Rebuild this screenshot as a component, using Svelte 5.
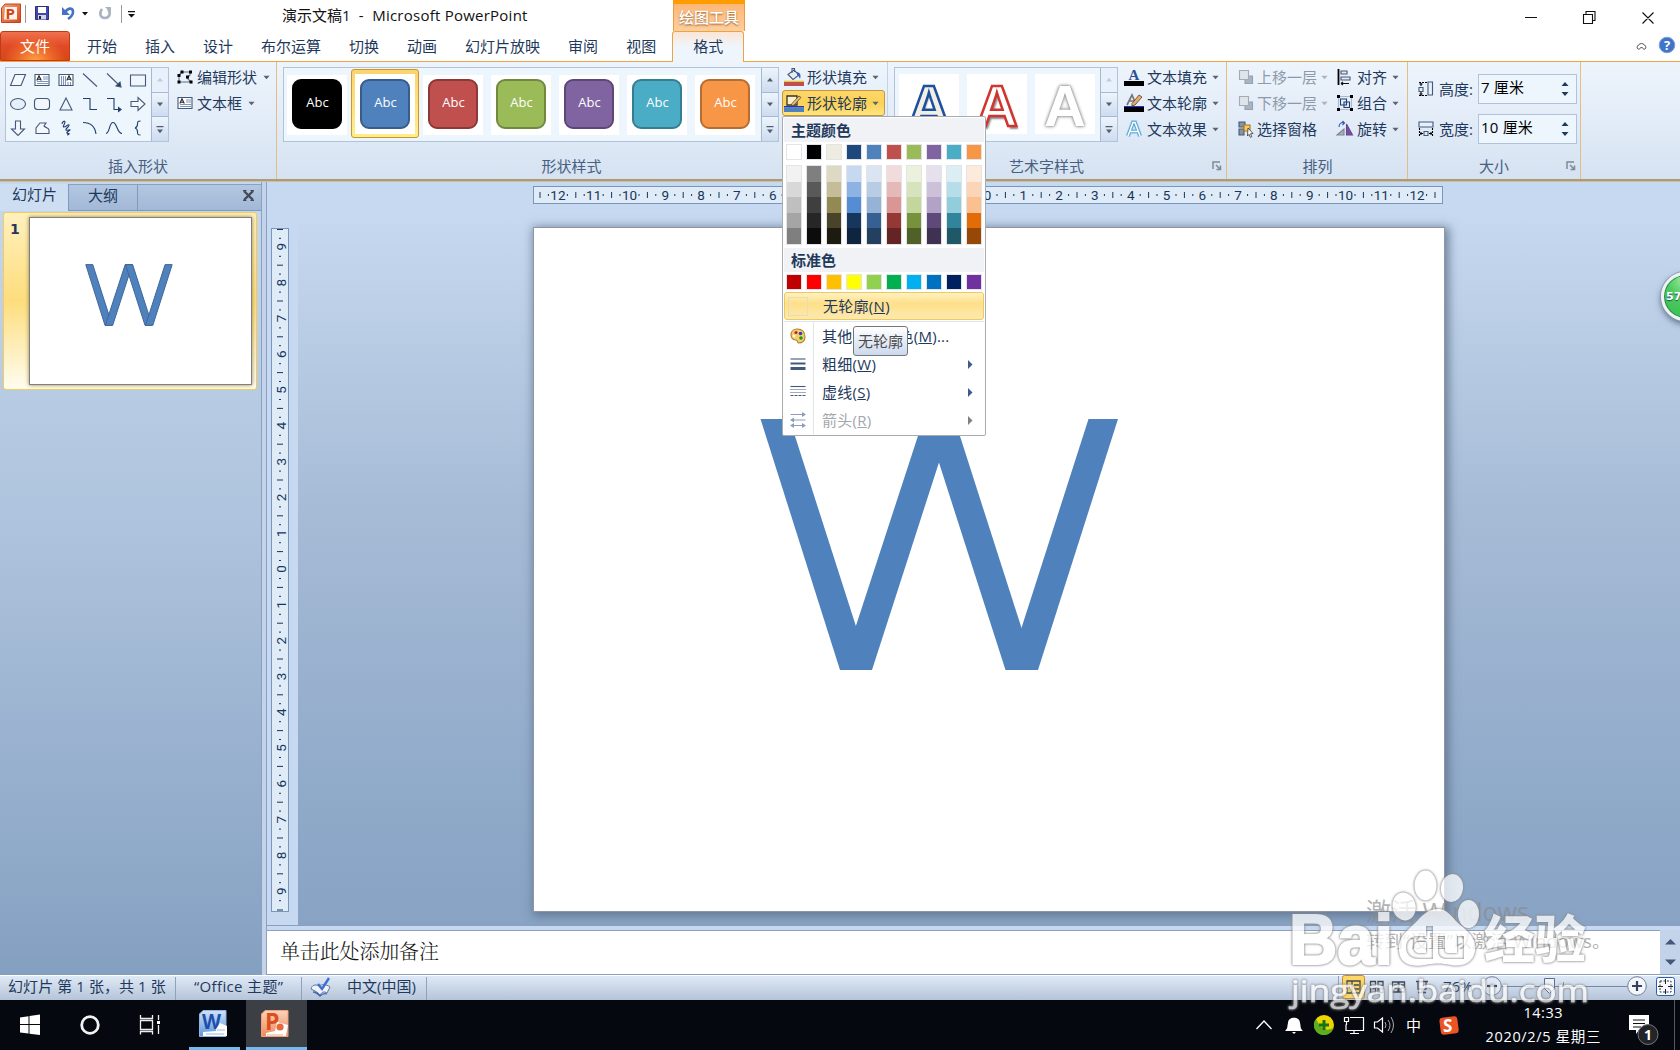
<script>
  const tabs = ['开始', '插入', '设计', '布尔运算', '切换', '动画', '幻灯片放映', '审阅', '视图'];
  const styles = [
    ['#000000', '#000000'],
    ['#4f81bd', '#385d8a'],
    ['#c0504d', '#8c3836'],
    ['#9bbb59', '#71893f'],
    ['#8064a2', '#5c4776'],
    ['#4bacc6', '#357d91'],
    ['#f79646', '#b66d31'],
  ];
  const shapes = ['para', 'tbox', 'vtbox', 'line', 'arrow', 'rect', 'oval', 'round', 'tri', 'elbow', 'elbowArrow', 'rightArrow', 'downArrow', 'free', 'scribble', 'arc', 'curve', 'brace'];
  const theme = ['#ffffff', '#000000', '#eeece1', '#1f497d', '#4f81bd', '#c0504d', '#9bbb59', '#8064a2', '#4bacc6', '#f79646'];
  const shades = [
    ['#f2f2f2', '#d8d8d8', '#bfbfbf', '#a5a5a5', '#7f7f7f'],
    ['#7f7f7f', '#595959', '#3f3f3f', '#262626', '#0c0c0c'],
    ['#ddd9c3', '#c4bd97', '#938953', '#494429', '#1d1b10'],
    ['#c6d9f0', '#8db3e2', '#548dd4', '#17365d', '#0f243e'],
    ['#dbe5f1', '#b8cce4', '#95b3d7', '#366092', '#244061'],
    ['#f2dcdb', '#e5b9b7', '#d99694', '#953734', '#632423'],
    ['#ebf1dd', '#d7e3bc', '#c3d69b', '#76923c', '#4f6128'],
    ['#e5e0ec', '#ccc1d9', '#b2a2c7', '#5f497a', '#3f3151'],
    ['#dbeef3', '#b7dde8', '#92cddc', '#31859b', '#205867'],
    ['#fdeada', '#fbd5b5', '#fac08f', '#e36c09', '#974806'],
  ];
  const standard = ['#c00000', '#ff0000', '#ffc000', '#ffff00', '#92d050', '#00b050', '#00b0f0', '#0070c0', '#002060', '#7030a0'];
  const hticks = Array.from({ length: 25 }, (_, i) => i - 12);
  const vticks = Array.from({ length: 19 }, (_, i) => i - 9);
  const step = 35.8;
</script>

{#snippet caret(cls)}
  <svg class="caret {cls}" viewBox="0 0 8 5" width="8" height="5"><path d="M0.5 0.5h7L4 4.5z" /></svg>
{/snippet}

{#snippet letters()}
  <svg class="fill" viewBox="0 0 910 683">
    <polygon points="226.5,191 255.5,191 336,442 306,442" />
    <polygon points="307.5,442 338,442 419,191 389.5,191" />
    <polygon points="391,191 420.5,191 501,442 471.5,442" />
    <polygon points="474,442 504,442 584,191 554.5,191" />
  </svg>
{/snippet}

{#snippet scroll(dis)}
  <div class="scroll">
    <span class="sb" class:dis><svg width="8" height="5" viewBox="0 0 8 5"><path d="M1 4.5h6L4 .8z" /></svg></span>
    <span class="sb"><svg width="8" height="5" viewBox="0 0 8 5"><path d="M1 .5h6L4 4.2z" /></svg></span>
    <span class="sb"><svg width="8" height="9" viewBox="0 0 8 9"><path d="M.5 1h7v1.2h-7zM1 4.5h6L4 8.2z" /></svg></span>
  </div>
{/snippet}

{#snippet icon(n)}
  <svg class="ic" width="20" height="20" viewBox="0 0 20 20" fill="none" stroke="#44597a" stroke-width="1.1">
    {#if n === 'para'}<path d="M7 4.500h10.500l-4.500 11h-10.500z" fill="#f4f8fd" />
    {:else if n === 'tbox' || n === 'textbox'}
      <path d="M3 4.500h14v11H3z" fill="#fff" /><path d="M11 7h5M11 9h5M5 11.500h11M5 13.500h11" stroke="#7d95bd" /><path d="M4.800 10.500 7 5.800l2.300 4.700M5.500 9.200h3" stroke="#222" />
    {:else if n === 'vtbox'}
      <path d="M3 4.500h14v11H3z" fill="#fff" /><path d="M5.500 6v9M7.500 6v9M9.500 6v9M12 12v3M14.500 12v3" stroke="#7d95bd" /><path d="M10.800 10.500 13 5.800l2.300 4.700M11.500 9.200h3" stroke="#222" />
    {:else if n === 'line'}<path d="M3 3.500l14 13" />
    {:else if n === 'arrow'}<path d="M3 3.500l12 11.500" /><path d="M17 17l-1-5-4 4z" fill="#1f3d6b" />
    {:else if n === 'rect'}<path d="M2.500 5h15v11h-15z" fill="#f1f6fc" />
    {:else if n === 'oval'}<ellipse cx="10" cy="10" rx="7.500" ry="5.500" fill="#e6effa" />
    {:else if n === 'round'}<rect x="2.500" y="4.500" width="15" height="11" rx="3" fill="#f1f6fc" />
    {:else if n === 'tri'}<path d="M10 4l6 12H4z" fill="#eef4fb" />
    {:else if n === 'elbow'}<path d="M3 4.500h7v11h7" stroke="#1f3d6b" />
    {:else if n === 'elbowArrow'}<path d="M3 4.500h7v11h5" stroke="#1f3d6b" /><path d="M18 15.500l-4-3v6z" fill="#1f3d6b" stroke="none" />
    {:else if n === 'rightArrow'}<path d="M3 7.500h7v-4l7 6.500-7 6.500v-4H3z" fill="#f4f8fd" />
    {:else if n === 'downArrow'}<path d="M7.500 3v8h-4l6.500 6.500 6.500-6.500h-4V3z" fill="#f4f8fd" />
    {:else if n === 'free'}<path d="M4 15.500V10l4-5h6l-2 3c2 2 5 2 5 4v3.500z" fill="#f4f8fd" />
    {:else if n === 'scribble'}<path d="M6 6c0-2 3-4 3-2s-3 5-1 5 4-3 5-2-4 4-3 5 4-1 4 0-4 2-3 3 3 0 2 1-1 1-2 1" stroke="#1f3d6b" stroke-width="1.100" />
    {:else if n === 'arc'}<path d="M3 4.500c7 0 12 4 13 11.500" stroke="#1f3d6b" />
    {:else if n === 'curve'}<path d="M2 15.500C6 15 5 4.500 9 4.500s4 11 9 11" stroke="#1f3d6b" />
    {:else if n === 'brace'}<path d="M12.500 3c-3 0-3 1-3 3s0 3.500-2.500 4c2.500.5 2.500 2 2.500 4s0 3 3 3" stroke="#1f3d6b" />
    {:else if n === 'edit'}<path d="M7 5h8v3l-3 3 4 4H4V8z" stroke="#5b6f8e" /><path d="M5.500 3.500h3v3h-3zM14 3.500h3v3h-3zM11 8.500h3v3h-3zM14.500 13.500h3v3h-3zM2.500 13.500h3v3h-3zM2.500 7h3v3h-3z" fill="#000" stroke="none" />
    {:else if n === 'fillc'}<path d="M4 7.500 10 3l5 5-6 4.500z" fill="#e9edf3" /><path d="M8 6V1.500h2.500V5" /><path d="M13 5c4 1 4 4 3 7-1-2-1-3-3-4z" fill="#3a62b0" stroke="none" /><path d="M0 14.500h20V19H0z" fill="#c0504d" stroke="none" /><path d="M0 13.500h20v1H0z" fill="#f4e22a" stroke="none" />
    {:else if n === 'outline'}<path d="M3 3h10v9H3z" stroke="#333" stroke-width="1.300" fill="#fdf0c4" /><path d="M8 10.500l7-7.500 2 1.500-7 7.500-3 1z" fill="#e7c27c" stroke="#5a4528" stroke-width=".8" /><path d="M0 13h20v1.500H0z" fill="#2233cc" stroke="none" /><path d="M0 14.500h20V19H0z" fill="#4f81bd" stroke="none" />
    {:else if n === 'tfill'}<text x="10" y="12.500" class="ser">A</text><path d="M0 14h20v5H0z" fill="#000" stroke="none" />
    {:else if n === 'tout'}<path d="M3 12 8 2l4 9M5 8h5" stroke="#777" stroke-width="1.700" /><path d="M8 10.500l7-8.500 3 2-7 8-3 1z" fill="#e5aa6c" stroke="#5a4528" stroke-width=".8" /><path d="M0 13h20v1H0z" fill="#2233cc" stroke="none" /><path d="M0 14h20v5H0z" fill="#000" stroke="none" />
    {:else if n === 'teff'}<path d="M4 17 9 3.500h2L16 17M6 12.500h8" stroke="#9ad0ef" stroke-width="5" opacity=".6" /><path d="M4 17 9 3.500h2L16 17M6 12.500h8" stroke="#5aa7d6" stroke-width="3.600" /><path d="M4 17 9 3.500h2L16 17M6 12.500h8" stroke="#fff" stroke-width="1.500" />
    {:else if n === 'front' || n === 'back'}<path d="M9 9h7.500v7.500H9z" fill="#a9b4c2" stroke="#94a0b0" /><path d="M3.500 3.500h9v9h-9z" fill="#dfe4ea" stroke="#a2abb8" />
    {:else if n === 'pane'}<path d="M3 3h6v5H3zM3 10h5v6H3z" fill="#8d939c" /><path d="M8 6h6v6H8z" fill="#fbcb5c" stroke="#a8761d" /><path d="M12 9l5 5.500-2.500.2 1.300 3-1.500.6-1.200-3L11.500 17z" fill="#fff" stroke="#333" stroke-width=".8" />
    {:else if n === 'align'}<path d="M3.500 2v16" stroke="#000" stroke-width="1.800" /><path d="M6 4h6v3H6zM6 10h9v3H6z" fill="#e4e9f0" /><path d="M6 16.500h8M6 16.500l2-1.500M6 16.500l2 1.500" stroke="#111" />
    {:else if n === 'group'}<path d="M3.500 3.500h13v13h-13z" stroke="#a9b8cc" /><path d="M5.500 6h6v6h-6zM9 9h5.500v5.500H9z" stroke="#1f3d6b" /><path d="M2 2h3v3H2zM15 2h3v3h-3zM2 15h3v3H2zM15 15h3v3h-3z" fill="#000" stroke="none" />
    {:else if n === 'rotate'}<path d="M11.500 16V5l6 11z" fill="#7a4fa0" stroke="#6a4390" /><path d="M9 16v-6l-7 6z" fill="#aab0ba" stroke="#7d8591" /><path d="M4 8c0-4 3-5 5-4M7.500 2l2 2-2 2" stroke="#2b5ca8" />
    {:else if n === 'height'}<path d="M12 3h4.500v13H12z" fill="#e6f0fb" /><path d="M3 3.500h8M3 16.500h8" stroke="#000" stroke-dasharray="2 1" /><path d="M5 4v3M5 13v4M3.500 5h3M3.500 15h3" stroke="#000" /><path d="M3 8.500h4v4H3z" />
    {:else if n === 'width'}<path d="M3 3h14v5H3z" fill="#e6f0fb" /><path d="M3.500 9v8M16.500 9v8" stroke="#000" stroke-dasharray="2 1" /><path d="M4 14.500h3M13 14.500h3M5 13v3M15 13v3" stroke="#000" /><path d="M8 12.500h4v4H8z" />
    {:else if n === 'palette'}<path d="M9 3c5 0 8 3 8 8 0 4-3 6-6 6-2 0-1-3-3-3-3 0-5-2-5-5s2-6 6-6z" fill="#f6cf6a" stroke="#b07d2a" /><circle cx="8" cy="6.500" r="1.600" fill="#c22" stroke="none" /><circle cx="12.500" cy="7.500" r="1.800" fill="#2346c4" stroke="none" /><circle cx="13" cy="12" r="1.800" fill="#1b9a2c" stroke="none" /><circle cx="6" cy="10" r="1.300" fill="#fff" stroke="none" />
    {:else if n === 'weight'}<path d="M2.500 5h15" /><path d="M2.500 9.500h15" stroke-width="2" /><path d="M2.500 14.500h15" stroke-width="3" />
    {:else if n === 'dash'}<path d="M2.500 4.500h15" /><path d="M2.500 7.500h15M2.500 10.500h15" stroke-dasharray="1 1" /><path d="M2.500 13.500h15" stroke-dasharray="3 1" />
    {:else if n === 'arrows'}<path d="M2.500 4.500h14M6 10h11.500M4 15.500h12" stroke="#8e9cb8" /><path d="M18 4.500l-4-2.500v5zM2 10l4-2.500v5zM2 15.500L6 13v5zM18 15.500L14 13v5z" fill="#8e9cb8" stroke="none" />
    {/if}
  </svg>
{/snippet}

<div class="app">
  <header class="title">
    <svg class="qat" width="150" height="31" viewBox="0 0 150 31">
      <defs><linearGradient id="pp" x1="0" y1="0" x2="1" y2="1"><stop offset="0" stop-color="#f7a27b" /><stop offset="1" stop-color="#d24a1c" /></linearGradient></defs>
      <path d="M5 4h15.500v18.500h-19V8z" fill="url(#pp)" stroke="#c8431c" /><path d="M5 7h12v12.500H4z" fill="#fff3ea" />
      <text x="5.500" y="19" class="plogo">P</text>
      <path d="M25.500 5v18M121.500 5v18" stroke="#9a9a9a" />
      <path d="M35.500 6.500h13v13h-13z" fill="#4248a8" stroke="#2b2f80" /><path d="M38 7h8v6h-8z" fill="#fff" /><path d="M38 15h8v4.500h-8z" fill="#cfd4ea" /><path d="M39 16h2v3h-2z" fill="#222" />
      <path d="M65 12c4-5 8-4 8 0 0 3-2 5-5 7" fill="none" stroke="#4472c4" stroke-width="2.600" /><path d="M62 7v8h8z" fill="#4472c4" />
      <path d="M82 12h6l-3 3.500zM128 14h7l-3.500 3.500zM128 11h7v1.300h-7z" fill="#111" />
      <path d="M102 9c-3 4-2 9 3 9s6-6 3-9" fill="none" stroke="#a9b3c2" stroke-width="2.600" /><path d="M105 7h6v6z" fill="#a9b3c2" />
    </svg>
    <span class="doc">演示文稿1<span class="prod">&nbsp; -&nbsp; Microsoft PowerPoint</span></span>
    <div class="context">绘图工具</div>
    <svg class="win" width="180" height="31" viewBox="1500 0 180 31" fill="none" stroke="#111"><path d="M1525 17.500h12M1583.500 14.500h9v9h-9zM1586 14v-2.500h9v9h-2M1642.500 12.500l11 11M1653.500 12.500l-11 11" stroke-width="1.100" /></svg>
  </header>
  <nav class="tabs">
    <div class="file">文件</div>
    {#each tabs as t}<div class="tab">{t}</div>{/each}
    <div class="tab active">格式</div>
    <svg class="help" width="50" height="30" viewBox="1630 31 50 30"><path d="M1637.500 48.500c-1.500-2.500 2.500-5 4-5s5.500 2.500 4 5c-1 1.500-3 0-4-1.500-1 1.500-3 3-4 1.500z" fill="none" stroke="#444" /><circle cx="1667" cy="45" r="7.800" fill="#3f74c8" stroke="#7ea1d8" /><text x="1667" y="50" class="q">?</text></svg>
  </nav>

  <section class="ribbon">
    <div class="group g1">
      <div class="body">
        <div class="gallery">
          <div class="shapes">{#each shapes as s}{@render icon(s)}{/each}</div>
          {@render scroll(true)}
        </div>
        <div class="cmds">
          <div class="cmd">{@render icon('edit')}<span>编辑形状</span>{@render caret('')}</div>
          <div class="cmd">{@render icon('textbox')}<span>文本框</span>{@render caret('')}</div>
        </div>
      </div>
      <div class="label">插入形状</div>
    </div>
    <div class="group g2">
      <div class="body">
        <div class="gallery">
          <div class="styles">
            {#each styles as [bg, bd], i}
              <div class="cell" class:sel={i === 1}><div class="tile" style="background:{bg};border-color:{bd}">Abc</div></div>
            {/each}
          </div>
          {@render scroll(false)}
        </div>
        <div class="cmds">
          <div class="cmd">{@render icon('fillc')}<span>形状填充</span>{@render caret('')}</div>
          <div class="cmd hot">{@render icon('outline')}<span>形状轮廓</span>{@render caret('')}</div>
        </div>
      </div>
      <div class="label">形状样式</div>
    </div>
    <div class="group g3">
      <div class="body">
        <div class="gallery">
          <div class="wa">
            <div class="cell"><span class="wordart a1">A</span></div>
            <div class="cell"><span class="wordart a2">A</span></div>
            <div class="cell"><span class="wordart a3">A</span></div>
          </div>
          {@render scroll(true)}
        </div>
        <div class="cmds">
          <div class="cmd">{@render icon('tfill')}<span>文本填充</span>{@render caret('')}</div>
          <div class="cmd">{@render icon('tout')}<span>文本轮廓</span>{@render caret('')}</div>
          <div class="cmd">{@render icon('teff')}<span>文本效果</span>{@render caret('')}</div>
        </div>
      </div>
      <div class="label">艺术字样式<svg class="launch" width="10" height="10" viewBox="0 0 10 10"><path d="M1 8V1h7M4 4l4 4M8.500 4.500v4h-4" /></svg></div>
    </div>
    <div class="group g4">
      <div class="body">
        <div class="cmds">
          <div class="cmd off">{@render icon('front')}<span>上移一层</span>{@render caret('dim')}</div>
          <div class="cmd off">{@render icon('back')}<span>下移一层</span>{@render caret('dim')}</div>
          <div class="cmd">{@render icon('pane')}<span>选择窗格</span></div>
        </div>
        <div class="cmds">
          <div class="cmd">{@render icon('align')}<span>对齐</span>{@render caret('')}</div>
          <div class="cmd">{@render icon('group')}<span>组合</span>{@render caret('')}</div>
          <div class="cmd">{@render icon('rotate')}<span>旋转</span>{@render caret('')}</div>
        </div>
      </div>
      <div class="label">排列</div>
    </div>
    <div class="group g5">
      <div class="body sizes">
        {#each [['height', '高度:', '7 厘米'], ['width', '宽度:', '10 厘米']] as [i, l, v]}
          <div class="size">{@render icon(i)}<span class="sl">{l}</span><div class="input"><span>{v}</span><svg width="8" height="16" viewBox="0 0 8 16"><path d="M.5 5h7L4 1zM.5 11h7L4 15z" /></svg></div></div>
        {/each}
      </div>
      <div class="label">大小<svg class="launch" width="10" height="10" viewBox="0 0 10 10"><path d="M1 8V1h7M4 4l4 4M8.500 4.500v4h-4" /></svg></div>
    </div>
  </section>

  <main class="work">
    <aside class="side">
      <div class="stabs">
        <div class="st on">幻灯片</div>
        <div class="st">大纲</div>
        <svg width="13" height="13" viewBox="0 0 13 13"><path d="M2 2l9 9M11 2l-9 9" stroke="#444b55" stroke-width="2.400" /><path d="M1 1.500h3.500M8.500 1.500h3.500M1 11.500h3.500M8.500 11.500h3.500" stroke="#444b55" /></svg>
      </div>
      <div class="thumb"><span>1</span><div class="mini">{@render letters()}</div></div>
    </aside>
    <div class="split"></div>
    <div class="right">
      <div class="canvas">
        <div class="gutter">
          <svg class="vr" width="18" height="684" viewBox="0 0 18 684">
            <rect x=".5" y=".5" width="17" height="683" />
            {#each vticks as v}
              <text transform="translate(14.500 {341 + v * step}) rotate(-90)">{Math.abs(v)}</text>
              <path d="M8 {332.500 + v * step}h2M8 {350.500 + v * step}h2" />
              {#if v < 9}<path d="M6 {359.400 + v * step}h6" />{/if}
            {/each}
            <path d="M6 1.500h6M6 682h6" />
          </svg>
        </div>
        <div class="stage">
          <svg class="hr" width="910" height="18" viewBox="0 0 910 18">
            <rect x=".5" y=".5" width="909" height="17" />
            {#each hticks as v}
              <text x={454.500 + v * step} y="14">{Math.abs(v)}</text>
              <path d="M{445 + v * step} 8v2M{464 + v * step} 8v2M{472.400 + v * step} 6v6" />
            {/each}
            <path d="M7 6v6" />
          </svg>
          <div class="slide">{@render letters()}</div>
        </div>
      </div>
      <div class="notes">
        <div class="note">单击此处添加备注</div>
        <div class="nsb"><svg width="11" height="28" viewBox="0 0 11 28"><path d="M0 6.500h11L5.500 1zM0 21.500h11L5.500 27z" /></svg></div>
      </div>
    </div>
  </main>

  <footer class="status">
    <div class="s1">幻灯片 第 1 张，共 1 张</div>
    <div class="s2">“Office 主题”</div>
    <div class="s3"><svg width="22" height="20" viewBox="0 0 22 20"><path d="M1 12c1-4 4-5 8-3 3-2 7-2 11 1l-3 6c-3-2-5-1-7 2-2-3-5-4-9-6z" fill="#eef2fa" stroke="#63779c" /><path d="M3 15c3 0 5 2 7 4 2-2 4-3 7-2" fill="none" stroke="#4468b4" stroke-width="1.300" /><path d="M8 7l4 5 7-11" fill="none" stroke="#3f6fd0" stroke-width="2.400" /></svg><span>中文(中国)</span></div>
    <svg class="view" width="350" height="25" viewBox="1330 975 350 25">
      <path d="M1338.500 976v23" stroke="#8fa2bd" />
      <rect x="1342.500" y="975.500" width="22" height="23" rx="2" fill="#fdd663" stroke="#c28a30" />
      <g fill="none" stroke="#3c4656" stroke-width="1.300"><path d="M1347 981h13v12h-13zM1352 981v12M1354 985h5M1354 989h5M1370.500 981.500h5v4h-5zM1378 981.500h5v4h-5zM1370.500 988.500h5v4h-5zM1378 988.500h5v4h-5zM1392.500 982h5.500v10h-5.500zM1399 982h5.500v10h-5.500zM1394 985h3M1394 988h3M1401 985h3M1401 988h3M1416 981.500h12M1418 982v7h8v-7M1422 989v4M1418 992.500h8" /></g>
      <text x="1443" y="992" class="pct">76%</text>
      <path d="M1502 986.500h125M1563.500 982v8" stroke="#7288aa" />
      <circle cx="1492" cy="986" r="9.300" fill="#dfe8f4" stroke="#6f7f99" /><path d="M1487 986h10" stroke="#33415c" stroke-width="2.200" />
      <circle cx="1637" cy="986" r="9.300" fill="#f3f6fa" stroke="#6f7f99" /><path d="M1632 986h10M1637 981v10" stroke="#33415c" stroke-width="2.200" />
      <path d="M1544.500 978.500h10v10l-5 5-5-5z" fill="#eef3fa" stroke="#5b6f91" />
      <rect x="1656.500" y="977.500" width="18" height="18" rx="2" fill="#f7fafe" stroke="#2e5fa8" /><path d="M1660 981h11v11h-11z" fill="none" stroke="#333" stroke-dasharray="2 1.500" /><path d="M1665.500 979v5M1665.500 989v5M1658 986.500h5M1668 986.500h5" stroke="#222" />
    </svg>
  </footer>

  <footer class="task">
    <svg width="320" height="50" viewBox="0 0 320 50">
      <path d="M20 17.500l8.500-1.300V24H20zM29.500 16l10.500-1.500V24H29.500zM20 25h8.500v8.500L20 32.500zM29.500 25H40v10l-10.500-1.300z" fill="#fff" />
      <circle cx="90" cy="25" r="8.300" fill="none" stroke="#f2f2f2" stroke-width="2.800" />
      <path d="M140.500 15v3.500h12V15M140.500 20.500h12v9h-12zM140.500 34.500v-3h12v3M158.500 15v5M158.500 25v9" fill="none" stroke="#eee" stroke-width="1.300" /><path d="M157 21h3v3h-3z" fill="#fff" />
      <rect x="246" width="61" height="50" fill="#3c3f44" />
      <path d="M189 47h51v3h-51zM246 47h61v3h-61z" fill="#76b9ed" />
      <linearGradient id="wd" x1="0" y1="0" x2="0" y2="1"><stop offset="0" stop-color="#cfe3f8" /><stop offset="1" stop-color="#5d97dc" /></linearGradient>
      <linearGradient id="pt" x1="0" y1="0" x2="0" y2="1"><stop offset="0" stop-color="#fbd3ba" /><stop offset="1" stop-color="#f08a5c" /></linearGradient>
      <path d="M203 10.500h23v26h-26.500V14z" fill="url(#wd)" stroke="#8fb4e4" /><text x="202" y="29" class="wl" textLength="19" lengthAdjust="spacingAndGlyphs">W</text><path d="M216 29l4-6 7 3v10h-24v-4l13-1z" fill="#fff" /><path d="M206 34h18M217 30h8" stroke="#9db9df" />
      <path d="M265 10.500h23v26h-26.500V14z" fill="url(#pt)" stroke="#f2a07a" /><text x="265" y="30" class="pl">P</text><path d="M277 22l11 3-2 11h-20v-3l9-2z" fill="#fff" /><circle cx="280" cy="27" r="3.600" fill="#e8683a" /><path d="M267 35h16" stroke="#eba689" />
    </svg>
    <svg width="430" height="50" viewBox="1250 1000 430 50">
      <path d="M1256.500 1029l7.500-8 7.500 8" fill="none" stroke="#fff" stroke-width="1.300" />
      <path d="M1285 1031c3-3 2-4 3-8 0-7 12-7 12 0 1 4 0 5 3 8zM1292 1032h4l-2 2z" fill="#fff" />
      <circle cx="1324" cy="1025" r="10" fill="#eed400" /><path d="M1316 1019a10 10 0 0 0 8 16c6 0 9-5 9-7-7 4-12 1-17-9z" fill="#5cae1e" /><path d="M1324 1020v10M1319 1025h10" stroke="#187318" stroke-width="3" />
      <path d="M1350 1017.500h13.500v13H1346v-6M1354 1031v2.500M1350 1033.500h9M1344.500 1017.500h4v4h-4zM1346.500 1022v3" fill="none" stroke="#fff" stroke-width="1.200" />
      <path d="M1374.500 1022h3l5-4v14l-5-4h-3z" fill="none" stroke="#fff" stroke-width="1.200" /><path d="M1385 1022q2 3 0 6M1388 1020q4 5 0 11M1391 1017q5 8 0 16" fill="none" stroke="#aaa" />
      <text x="1406" y="1030.500" class="zh">中</text>
      <rect x="1440" y="1017" width="18" height="17" rx="3" fill="#ec5426" transform="rotate(-7 1449 1025)" /><text x="1443" y="1032" class="sg">S</text>
      <path d="M1629 1015h20v15h-10l-3 4v-4h-7z" fill="#fff" /><path d="M1633 1020h12M1633 1023.500h12M1633 1027h8" stroke="#111" /><circle cx="1648" cy="1034.500" r="10" fill="#222427" stroke="#777" /><text x="1644" y="1040" class="bd">1</text>
      <path d="M1674.500 1000v50" stroke="#555a60" />
      <text x="1543" y="1018" class="clk" textLength="39">14:33</text>
      <text x="1543" y="1041.500" class="clk" textLength="115">2020/2/5 星期三</text>
    </svg>
  </footer>

  <div class="menu">
    <div class="mh">主题颜色</div>
    <div class="sw">{#each theme as c}<i style="background:{c}"></i>{/each}</div>
    <div class="sw tall">
      {#each shades as col}<div class="colm">{#each col as c}<b style="background:{c}"></b>{/each}</div>{/each}
    </div>
    <div class="mh">标准色</div>
    <div class="sw">{#each standard as c}<i style="background:{c}"></i>{/each}</div>
    <div class="none"><em></em><span>无轮廓(<u>N</u>)</span></div>
    <div class="items">
      <div class="mi">{@render icon('palette')}<span>其他轮廓颜色(<u>M</u>)...</span></div>
      <div class="mi">{@render icon('weight')}<span>粗细(<u>W</u>)</span><svg width="5" height="9" viewBox="0 0 5 9"><path d="M0 0l4.500 4.500L0 9z" /></svg></div>
      <div class="mi">{@render icon('dash')}<span>虚线(<u>S</u>)</span><svg width="5" height="9" viewBox="0 0 5 9"><path d="M0 0l4.500 4.500L0 9z" /></svg></div>
      <div class="mi gray">{@render icon('arrows')}<span>箭头(<u>R</u>)</span><svg width="5" height="9" viewBox="0 0 5 9"><path d="M0 0l4.500 4.500L0 9z" /></svg></div>
    </div>
    <div class="tip">无轮廓</div>
  </div>

  <div class="bubble">57</div>

  <div class="activate"><p class="big">激活 Windows</p><p>转到“设置”以激活 Windows。</p></div>

  <svg class="mark" width="320" height="160" viewBox="1280 860 320 160">
    <g class="halo">
      <ellipse cx="1425.500" cy="885.500" rx="11" ry="15" /><ellipse cx="1452" cy="888" rx="11" ry="14" transform="rotate(8 1452 888)" />
      <ellipse cx="1404" cy="906.500" rx="11.500" ry="14" transform="rotate(-12 1404 906)" /><ellipse cx="1468.500" cy="914" rx="10.500" ry="14" />
      <path fill-rule="evenodd" d="M1438 909c9 0 14 8 20 14 9 8 19 14 17 28-2 13-14 16-24 14-10-2-16-2-26 0-12 2-25 0-26-14-1-14 8-20 16-28 7-7 12-14 23-14zM1418 936c-9 0-12 6-12 11 0 8 5 12 13 12h14v-33h-7v10zM1426 942v11h-6c-4 0-6-2-6-6 0-3 2-5 5-5zM1438 936v15c0 6 4 8 9 8h17v-23h-7v17h-8c-3 0-4-1-4-4v-13z" />
      <text x="1289" y="964" class="bai" textLength="104" lengthAdjust="spacingAndGlyphs">Bai</text>
      <text x="1484" y="958" class="jy">经验</text>
      <text x="1291" y="1002" class="url" textLength="298" lengthAdjust="spacingAndGlyphs">jingyan.baidu.com</text>
    </g>
  </svg>
</div>

<style>
  :global(body) { margin: 0; overflow: hidden; }
  * { box-sizing: border-box; }
  .app { position: relative; width: 1680px; height: 1050px; overflow: hidden; display: flex; flex-direction: column; background: #fff; color: #1e395b; font: 15px/20px "Open Sans", "Noto Sans CJK SC", sans-serif; white-space: nowrap; }
  svg { display: block; flex: none; }
  .title { height: 31px; display: flex; flex: none; color: #111; }
  .doc { width: 391px; margin-left: 132px; line-height: 31px; letter-spacing: 0; }
  .prod { letter-spacing: .24px; }
  .context { width: 72px; border: 1px solid #ee9a3a; border-top: 4px solid #ff9c00; border-bottom: 0; background: linear-gradient(#fcb777, #fdcf9f); color: #fff; font-weight: 500; text-align: center; line-height: 26px; text-shadow: 0 1px 2px #9c5d25; }
  .win { margin-left: auto; }
  .plogo { font: bold 15px "Open Sans", sans-serif; fill: #d04515; }
  .tabs { height: 31px; flex: none; display: flex; border-bottom: 1px solid #eda440; position: relative; }
  .file { width: 70px; margin-right: 3px; border: 1px solid #c03c16; border-radius: 3px 3px 0 0; background: radial-gradient(ellipse at 50% 110%, #ffa64a, #ee6a2b 35%, transparent 65%), linear-gradient(#f0714e, #e04a26 50%, #d94718); color: #fff; text-align: center; line-height: 28px; }
  .tab { padding: 0 14px; line-height: 30px; }
  .tab.active { height: 31px; width: 72px; margin-left: 2px; border: 1px solid #eda440; border-bottom: 0; border-radius: 3px 3px 0 0; background: linear-gradient(#fbe6d6, #eff5fc 50%); padding: 0; text-align: center; line-height: 28px; }
  .help { margin-left: auto; }
  .q { font: bold 13px "Open Sans", sans-serif; fill: #fff; text-anchor: middle; }

  .ribbon { height: 119px; flex: none; display: flex; background: linear-gradient(#edf4fc, #e1ebf7 55%, #d5e2f1); border-bottom: 2px solid #b09a72; box-shadow: 0 1px 0 #c5c0a8; position: relative; }
  .group { border-right: 1px solid #e5bd80; display: flex; flex-direction: column; padding-top: 5px; }
  .g1 { width: 277px; } .g2 { width: 611px; border-color: #c3d2e5; } .g3 { width: 339px; } .g4 { width: 181px; } .g5 { width: 173px; }
  .body { display: flex; height: 87px; }
  .label { height: 24px; text-align: center; line-height: 24px; color: #47607f; position: relative; }
  .g2 .label, .g3 .label { padding-right: 21px; }
  .g4 .label { padding-left: 1px; }
  .launch { position: absolute; right: 4px; top: 7px; fill: none; stroke: #7f8997; stroke-width: 1.500; }
  .gallery { display: flex; height: 75px; border: 1px solid #b2c2da; background: #edf5fd; }
  .g1 .gallery { margin-left: 5px; width: 164px; }
  .shapes { width: 146px; display: grid; grid-template-columns: repeat(6, 24px); grid-template-rows: repeat(3, 24px); place-items: center; }
  .scroll { width: 17px; display: flex; flex-direction: column; border-left: 1px solid #a6b7d2; margin-left: auto; }
  .sb { flex: 1; display: flex; align-items: center; justify-content: center; background: linear-gradient(#edf4fc, #cddcf0); border-bottom: 1px solid #a6b7d2; }
  .sb:last-child { border: 0; }
  .sb path { fill: #54606f; }
  .sb.dis { background: #e8f1fb; } .sb.dis path { fill: #bfcbe0; }
  .cmds { display: flex; flex-direction: column; margin-left: 5px; margin-top: -3px; height: 78px; }
  .cmd { display: flex; align-items: center; height: 26px; padding: 0 3px; gap: 2px; border-radius: 3px; }
  .caret { width: 7px; margin-left: 3px; fill: #5b6470; margin-right: 2px; }
  .caret.dim { fill: #aab3bf; }
  .off { color: #8e9aab; }
  .g1 .cmds { margin-left: 3px; } .g1 .cmd { gap: 2px; }
  .g1 .caret { margin-left: 4px; }
  .g2 .gallery { margin-left: 6px; width: 496px; }
  .styles { display: flex; margin-left: -1px; }
  .cell { width: 68px; height: 73px; padding: 6px 4px; display: flex; }
  .tile { display: grid; place-items: center; border: 2px solid; border-radius: 9px; color: #fff; font: 13px/40px "Open Sans", sans-serif; height: 50px; padding: 0 0 4px 1px; }
  .styles .cell { padding: 11px 9px; background: linear-gradient(#fff, #fff) center / 60px 60px no-repeat; }
  .styles .cell .tile { width: 50px; }
  .styles .cell.sel { height: 69px; margin: 1px 0 0; border: 1px solid #c9962f; border-radius: 3px; background: linear-gradient(#fff, #fff) center / 60px 60px no-repeat, linear-gradient(#fcd36c, #ffee8c); padding: 9px 8px; }
  .g2 .cmds { margin-left: 3px; width: 103px; } .g3 .cmd { padding-left: 1px; padding-right: 0; gap: 3px; }
  .g3 .cmd .caret, .g2 .cmd .caret { margin-left: 2px; }
  .g2 .cmd { padding: 0 0 0 2px; gap: 3px; }
  .g2 .hot { background: linear-gradient(#fdd669, #fbd257 50%, #fee480); border: 1px solid #c29743; padding-left: 1px; }
  .g3 .gallery { margin-left: 6px; width: 224px; }
  .wa { display: flex; }
  .wordart { width: 60px; height: 60px; background: #fff; text-align: center; font: bold 58px/64px "Liberation Sans", sans-serif; -webkit-text-stroke: 2.500px #1a50a0; color: #f3efe2; text-shadow: 1px 2px 2px #8a8a8a; }
  .a2 { -webkit-text-stroke-color: #d0352f; color: #fff; text-shadow: 2px 3px 2px #8a8a8a; }
  .a3 { -webkit-text-stroke: 0; color: #fff; text-shadow: 0 0 2px #999, 0 0 3px #999, 0 0 4px #aaa; }
  .ser { font: bold 15px "Liberation Serif", serif; fill: #2c4f98; stroke: none; text-anchor: middle; }
  .g4 .cmds { margin-left: 6px; } .g4 .cmds + .cmds { margin-left: 0; } .g4 .cmds + .cmds .cmd { padding-left: 2px; gap: 2px; }
  .g4 .cmds + .cmds .caret { margin-left: 3px; }
  .g4 .cmds:first-child .cmd { gap: 1px; }
  .sizes { flex-direction: column; gap: 10px; padding: 7px 3px 0 8px; }
  .size { display: flex; align-items: center; height: 30px; }
  .sl { width: 39px; margin-left: 3px; margin-right: -1px; padding-top: 0; }
  .input { width: 99px; height: 30px; margin-left: 1px; border: 1px solid #b0c2dc; background: #edf5fd; color: #000; display: flex; align-items: center; justify-content: space-between; padding: 0 7px 4px 2px; letter-spacing: .2px; }
  .input svg { fill: #1e395b; margin-top: 4px; }

  .work { height: 794px; flex: none; display: flex; background: #c6d9f0; }
  .side { width: 262px; padding-top: 3px; border-right: 1px solid #8ba0c0; background: linear-gradient(#c6d8ee, #adc2dc 45%, #84a0c1); }
  .stabs { height: 27px; display: flex; align-items: center; background: linear-gradient(#b2c7e1, #a2b8d6); border-bottom: 1px solid #8199be; border-top: 1px solid #8ba0c0; padding-right: 6px; }
  .st { width: 69px; height: 26px; line-height: 21px; text-align: center; border-right: 1px solid #8199be; }
  .st.on { background: #cddef2; height: 27px; line-height: 21px; padding-left: 1px; }
  .stabs svg { margin: -4px 0 0 auto; }
  .thumb { display: flex; width: 254px; height: 178px; margin: 1px 0 0 3px; border: 1px solid #f3cc5c; border-radius: 3px; padding: 4px 0 0 6px; background: linear-gradient(#fff0bd, #fddd7d 50%, #fffdf0); }
  .thumb span { width: 19px; padding-top: 2px; font: bold 14px/20px "DejaVu Sans", sans-serif; }
  .mini { width: 223px; height: 168px; background: #fff; border: 1px solid #7f7f7f; box-shadow: 0 0 4px #97824a; padding-left: 1px; }
  .fill { width: 100%; height: 100%; fill: #4f81bd; }
  .mini .fill, .mini :global(.fill) { stroke: #3d6598; stroke-width: 4; }
  .split { width: 5px; background: #c3d4ea; border-right: 1px solid #8ba0c0; }
  .right { flex: 1; display: flex; flex-direction: column; }
  .canvas { height: 745px; display: flex; border-bottom: 1px solid #8ba0c0; background: linear-gradient(#c6d9f0 30px, #c1d4eb 80px, #a6bbd6 330px, #8ca7c7 660px, #88a3c3); }
  .gutter { width: 31px; background: #c6d9f0; padding: 47px 0 0 4px; }
  .stage { flex: 1; padding: 5px 0 0 235px; }
  .hr { margin-bottom: 23px; }
  .slide { width: 912px; height: 685px; background: #fff; border: 1px solid #8d96a3; box-shadow: 2px 2px 9px 2px #5c6f8acc; }
  .vr rect, .hr rect { fill: #dfebf7; stroke: #7b96bd; }
  .vr text, .hr text { font: 13.500px Roboto, sans-serif; fill: #16365c; text-anchor: middle; }
  .vr path, .hr path { stroke: #16365c; fill: none; }
  .notes { height: 49px; display: flex; padding-top: 4px; border-bottom: 1px solid #8ba0c0; border-top: 0; }
  .note { flex: 1; background: #fff; border-top: 1px solid #8ba0c0; color: #111; font: 300 20px/40px "Noto Serif CJK SC", "Noto Sans CJK SC", serif; padding-left: 13px; height: 44px; letter-spacing: -.15px; }
  .nsb { width: 20px; display: grid; place-items: center; background: #c2d3ea; fill: #44597a; }

  .status { height: 26px; flex: none; display: flex; align-items: center; background: linear-gradient(#dfe9f6, #c7d4e5 55%, #b3c3d7); border-top: 1px solid #fff; }
  .status div { height: 24px; line-height: 18px; border-right: 1px solid #8fa2bd; }
  .s1 { width: 176px; padding-left: 8px; letter-spacing: .08px; } .s2 { width: 126px; padding-left: 18px; letter-spacing: .35px; }
  .s3 { width: 125px; padding-left: 8px; display: flex; gap: 15px; }
  .view { margin: -2px 0 0 auto; }
  .pct { font: 15px "Open Sans", sans-serif; fill: #1e395b; }
  .task { height: 50px; flex: none; display: flex; justify-content: space-between; background: #05080f; margin-top: -1px; }
  .wl { font: bold 22px "Open Sans", sans-serif; fill: #1e4fae; } .pl { font: bold 23px "Open Sans", sans-serif; fill: #d9501e; }
  .zh { font: 15px "Noto Sans CJK SC", sans-serif; fill: #fff; }
  .sg { font: bold 17px "Open Sans", sans-serif; fill: #fff; }
  .bd { font: bold 14px "Open Sans", sans-serif; fill: #fff; }
  .clk { font: 14.500px "Open Sans", "Noto Sans CJK SC", sans-serif; fill: #fff; text-anchor: middle; }

  .menu { position: absolute; left: 782px; top: 116px; width: 204px; height: 320px; border: 1px solid #a7abb0; border-radius: 2px; background: #fff; padding: 1px; display: flex; flex-direction: column; }
  .mh { height: 24px; background: #f0f2f5; font-weight: 700; line-height: 24px; padding-left: 7px; margin-bottom: 2px; }
  .sw { display: flex; gap: 4px; padding-left: 2px; margin-bottom: 2px; height: 16px; }
  .sw i { width: 16px; height: 16px; border: 1px solid #e2e4e7; }
  .sw.tall { height: 80px; margin: 3px 0; }
  .colm { width: 16px; border: 1px solid #e2e4e7; display: flex; flex-direction: column; }
  .colm b { flex: 1; }
  .none { height: 28px; flex: none; display: flex; align-items: center; border: 1px solid #efc959; border-radius: 3px; background: linear-gradient(#fff1c2, #fee08a 40%, #fce9b0); padding-left: 3px; }
  .none em { width: 20px; height: 19px; border: 1px solid #e9dcb4; margin-right: 15px; }
  .none span, .mi span { letter-spacing: .28px; }
  .items { flex: 1; margin-top: 1px; border-top: 1px solid #e2e4e7; padding-left: 4px; background: linear-gradient(90deg, transparent 29px, #e2e4e7 29px, #e2e4e7 30px, transparent 30px); }
  .mi { display: flex; align-items: center; height: 28px; }
  .mi span { margin-left: 14px; }
  .mi svg:last-child { margin-left: auto; margin-right: 11px; fill: #3d5a92; }
  .gray { color: #a2a7ad; } .gray svg:last-child { fill: #808080; }
  .tip { position: absolute; left: 70px; top: 209px; width: 55px; height: 30px; border: 1px solid #767676; border-radius: 3px; background: linear-gradient(#fff, #cbd9ee); color: #4c4c4c; text-align: center; line-height: 28px; }
  .bubble { position: absolute; left: 1661px; top: 272px; width: 49px; height: 49px; border-radius: 50%; background: radial-gradient(circle at 50% 10%, #a5eba2, #4ecb60 40%, #35bd50); border: 3px solid #eef2f6; box-shadow: 0 0 0 1px #8d9aa8, inset 0 0 0 1px #2b8a45, 0 3px 6px #5a6f88; color: #fff; font: bold 11px/43px "DejaVu Sans", sans-serif; padding-left: 2px; text-shadow: 0 1px 1px #246; }
  .activate { position: absolute; left: 1366px; top: 896px; color: #8a8a8aaa; font-size: 18.500px; line-height: 30px; }
  .activate p { margin: 0; } .activate .big { font-size: 25px; line-height: 30px; }
  .mark { position: absolute; left: 1280px; top: 860px; }
  .halo { fill: #fff; opacity: .76; filter: drop-shadow(0 0 1px #777) drop-shadow(0 0 1px #999); }
  .bai { font: bold 70px "Liberation Sans", sans-serif; stroke: #fff; stroke-width: 2; } .jy { font: 900 51px "Noto Sans CJK SC", sans-serif; }
  .url { font: 500 31px "Open Sans", sans-serif; stroke: #fff; stroke-width: .6; }
</style>
